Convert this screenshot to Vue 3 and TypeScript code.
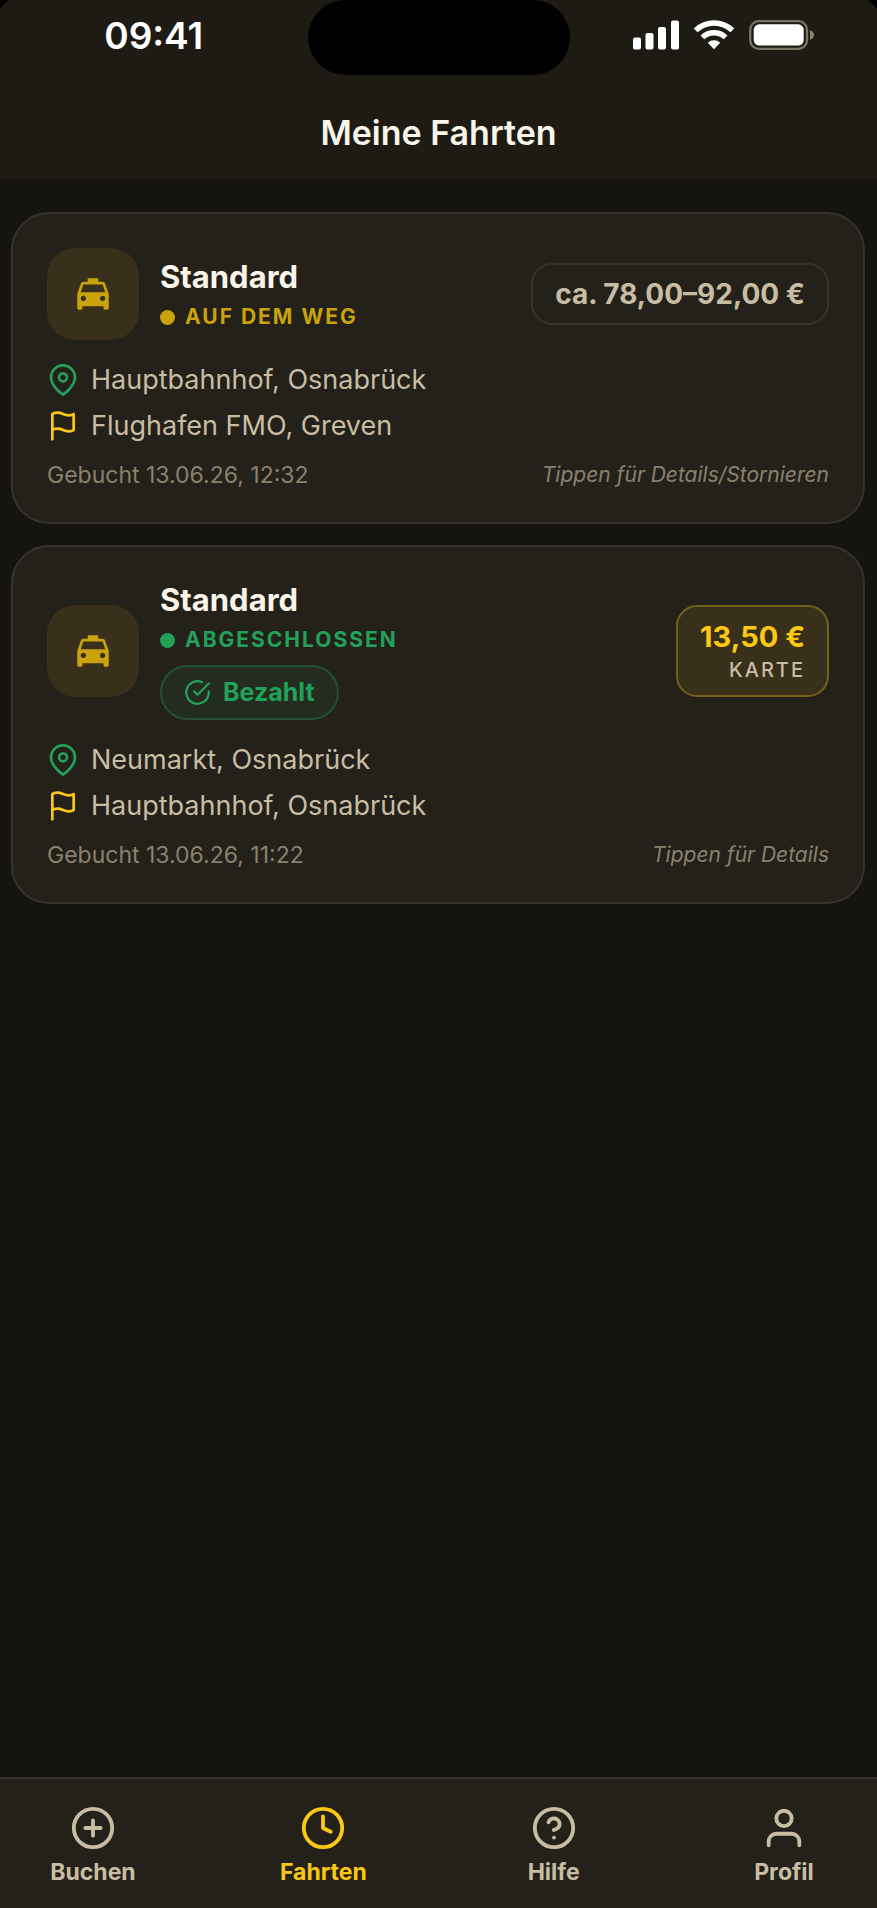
<script setup lang="ts">
import { ref } from 'vue'

interface Ride {
  id: number
  type: string
  status: string
  tone: 'active' | 'done'
  paid: boolean
  price: string
  method?: string
  from: string
  to: string
  booked: string
  hint: string
}

interface Tab {
  id: string
  label: string
}

const rides: Ride[] = [
  {
    id: 1,
    type: 'Standard',
    status: 'Auf dem Weg',
    tone: 'active',
    paid: false,
    price: 'ca. 78,00–92,00 €',
    from: 'Hauptbahnhof, Osnabrück',
    to: 'Flughafen FMO, Greven',
    booked: 'Gebucht 13.06.26, 12:32',
    hint: 'Tippen für Details/Stornieren',
  },
  {
    id: 2,
    type: 'Standard',
    status: 'Abgeschlossen',
    tone: 'done',
    paid: true,
    price: '13,50 €',
    method: 'Karte',
    from: 'Neumarkt, Osnabrück',
    to: 'Hauptbahnhof, Osnabrück',
    booked: 'Gebucht 13.06.26, 11:22',
    hint: 'Tippen für Details',
  },
]

const tabs: Tab[] = [
  { id: 'book', label: 'Buchen' },
  { id: 'rides', label: 'Fahrten' },
  { id: 'help', label: 'Hilfe' },
  { id: 'profile', label: 'Profil' },
]

const activeTab = ref('rides')
</script>

<template>
  <div class="app">
    <header class="header">
      <div class="statusbar">
        <time class="clock">09:41</time>
        <div class="island"></div>
        <div class="indicators" aria-hidden="true">
          <svg width="46" height="30" viewBox="0 0 46 30" fill="#fff">
            <rect x="0" y="17.5" width="8" height="12" rx="2" />
            <rect x="12.5" y="13" width="8" height="16.5" rx="2" />
            <rect x="25" y="7" width="8" height="22.5" rx="2" />
            <rect x="38" y="0.5" width="8" height="29" rx="2" />
          </svg>
          <svg width="40" height="30" viewBox="0 0 40 30" fill="none" stroke="#fff" stroke-width="5.4">
            <path d="M1.7 10.4a26.3 26.3 0 0 1 36.6 0" />
            <path d="M8.4 17.4a16.7 16.7 0 0 1 23.2 0" />
            <path d="M20 29.3l-6.2-6.6a9.3 9.3 0 0 1 12.4 0z" fill="#fff" stroke="none" />
          </svg>
          <svg width="65" height="30" viewBox="0 0 65 30">
            <rect x="1.2" y="1.2" width="56.8" height="27.6" rx="8.5" fill="none" stroke="#7c7464" stroke-width="2.3" />
            <rect x="4.7" y="4.3" width="50" height="21.2" rx="5.5" fill="#fff" />
            <path d="M61 10.3c2.4.6 4 2.4 4 4.7s-1.6 4.1-4 4.7z" fill="#8a8170" />
          </svg>
        </div>
      </div>
      <h1 class="title">Meine Fahrten</h1>
    </header>

    <main class="content">
      <ul class="rides">
        <li v-for="ride in rides" :key="ride.id">
          <button type="button" class="card">
            <span class="summary">
              <span class="tile">
                <svg width="42" height="42" viewBox="0 0 24 24" fill="currentColor" aria-hidden="true">
                  <path
                    d="M18.92 6.01C18.72 5.42 18.16 5 17.5 5H15V3H9v2H6.5c-.66 0-1.21.42-1.42 1.01L3 12v8c0 .55.45 1 1 1h1c.55 0 1-.45 1-1v-1h12v1c0 .55.45 1 1 1h1c.55 0 1-.45 1-1v-8l-2.08-5.99zM6.5 16c-.83 0-1.5-.67-1.5-1.5S5.67 13 6.5 13s1.5.67 1.5 1.5S7.33 16 6.5 16zm11 0c-.83 0-1.5-.67-1.5-1.5s.67-1.5 1.5-1.5 1.5.67 1.5 1.5-.67 1.5-1.5 1.5zM5 11l1.5-4.5h11L19 11H5z"
                  />
                </svg>
              </span>
              <span class="info">
                <span class="name">{{ ride.type }}</span>
                <span class="status" :class="ride.tone">
                  <span class="dot"></span>
                  <span>{{ ride.status }}</span>
                </span>
                <span v-if="ride.paid" class="badge">
                  <svg class="line-icon" width="27" height="27" viewBox="0 0 24 24" aria-hidden="true">
                    <path d="M22 11.08V12a10 10 0 1 1-5.93-9.14" />
                    <path d="M22 4L12 14.01l-3-3" />
                  </svg>
                  <span>Bezahlt</span>
                </span>
              </span>
              <span class="price" :class="{ final: ride.method }">
                <span class="amount">{{ ride.price }}</span>
                <span v-if="ride.method" class="method">{{ ride.method }}</span>
              </span>
            </span>

            <span class="stop">
              <svg class="line-icon pickup" width="32" height="32" viewBox="0 0 24 24" aria-hidden="true">
                <path d="M21 10c0 7-9 13-9 13s-9-6-9-13a9 9 0 0 1 18 0z" />
                <circle cx="12" cy="10" r="3" />
              </svg>
              <span>{{ ride.from }}</span>
            </span>
            <span class="stop">
              <svg class="line-icon target" width="32" height="32" viewBox="0 0 24 24" aria-hidden="true">
                <path d="M4 15s1-1 4-1 5 2 8 2 4-1 4-1V3s-1 1-4 1-5-2-8-2-4 1-4 1z" />
                <path d="M4 22v-7" />
              </svg>
              <span>{{ ride.to }}</span>
            </span>

            <span class="meta">
              <span class="booked">{{ ride.booked }}</span>
              <em class="hint">{{ ride.hint }}</em>
            </span>
          </button>
        </li>
      </ul>
    </main>

    <nav class="tabs">
      <button
        v-for="tab in tabs"
        :key="tab.id"
        type="button"
        class="tab"
        :class="{ current: tab.id === activeTab }"
        :aria-current="tab.id === activeTab ? 'page' : undefined"
        @click="activeTab = tab.id"
      >
        <svg class="line-icon" width="46" height="46" viewBox="0 0 24 24" aria-hidden="true">
          <circle v-if="tab.id !== 'profile'" cx="12" cy="12" r="10" />
          <path v-if="tab.id === 'book'" d="M12 8v8M8 12h8" />
          <path v-else-if="tab.id === 'rides'" d="M12 6v6l4 2" />
          <path v-else-if="tab.id === 'help'" d="M9.09 9a3 3 0 0 1 5.83 1c0 2-3 3-3 3M12 17h.01" />
          <template v-else>
            <path d="M20 21v-2a4 4 0 0 0-4-4H8a4 4 0 0 0-4 4v2" />
            <circle cx="12" cy="7" r="4" />
          </template>
        </svg>
        <span>{{ tab.label }}</span>
      </button>
    </nav>
  </div>
</template>

<style>
body {
  margin: 0;
  background: #15140f;
}
</style>

<style scoped>
.app {
  display: flex;
  flex-direction: column;
  min-height: 100vh;
  background: #15140f;
  color: #c8bda3;
  font-family: Inter, Roboto, "Liberation Sans", sans-serif;
}

button {
  margin: 0;
  border: 0;
  background: none;
  color: inherit;
  font: inherit;
  cursor: pointer;
}

.line-icon {
  flex: none;
  fill: none;
  stroke: currentColor;
  stroke-width: 2;
  stroke-linecap: round;
  stroke-linejoin: round;
}

.header {
  padding-bottom: 24px;
  background:
    linear-gradient(135deg, #000 6px, transparent 6px),
    linear-gradient(225deg, #000 6px, transparent 6px),
    #1e1b15;
}

.statusbar {
  display: grid;
  grid-template-columns: 1fr 262px 1fr;
  height: 75px;
}

.clock {
  align-self: start;
  justify-self: center;
  padding-top: 14px;
  color: #fff;
  font-size: 37px;
  font-weight: 600;
  line-height: 44px;
}

.island {
  height: 75px;
  border-radius: 38px;
  background: #000;
}

.indicators {
  display: flex;
  align-items: flex-start;
  justify-content: center;
  gap: 15px;
  padding-top: 20px;
}

.title {
  margin: 36px 0 0;
  color: #faf5e9;
  font-size: 34px;
  font-weight: 600;
  line-height: 44px;
  text-align: center;
}

.content {
  flex: 1;
  padding: 33px 12px 33px 11px;
}

.rides {
  display: flex;
  flex-direction: column;
  gap: 21px;
  margin: 0;
  padding: 0;
  list-style: none;
}

.card {
  display: flex;
  flex-direction: column;
  gap: 12px;
  width: 100%;
  padding: 34px 34px 33px;
  border: 2px solid #36332d;
  border-radius: 38px;
  background: #24211b;
  text-align: left;
}

.summary {
  display: flex;
  align-items: center;
  gap: 21px;
  margin-bottom: 11px;
}

.tile {
  display: flex;
  flex: none;
  align-items: center;
  justify-content: center;
  width: 92px;
  height: 92px;
  border-radius: 28px;
  background: #38301a;
  color: #c9a20c;
}

.info {
  display: flex;
  flex: 1;
  flex-direction: column;
  align-items: flex-start;
}

.name {
  color: #faf5e9;
  font-size: 31px;
  font-weight: 700;
  line-height: 38px;
}

.status {
  display: flex;
  align-items: center;
  gap: 10px;
  margin-top: 8px;
  font-size: 21px;
  font-weight: 700;
  line-height: 26px;
  letter-spacing: 2px;
  text-transform: uppercase;
}

.status.active {
  color: #c9a20c;
}

.status.done {
  color: #22a159;
}

.dot {
  width: 15px;
  height: 15px;
  border-radius: 50%;
  background: currentColor;
}

.badge {
  display: flex;
  align-items: center;
  gap: 12px;
  margin-top: 12px;
  padding: 11px 22px;
  border: 2px solid #235032;
  border-radius: 28px;
  background: #242c20;
  color: #22a159;
  font-size: 25px;
  font-weight: 700;
  line-height: 29px;
}

.price {
  display: flex;
  flex: none;
  flex-direction: column;
  align-items: flex-end;
  padding: 11px 22px;
  border: 2px solid #36332d;
  border-radius: 21px;
  color: #c8bda3;
}

.amount {
  font-size: 28px;
  font-weight: 700;
  line-height: 36px;
}

.price.final {
  border-color: #75601a;
  background: #38301a;
}

.final .amount {
  color: #fcc814;
  font-size: 29px;
  line-height: 38px;
}

.method {
  font-size: 20px;
  font-weight: 500;
  line-height: 28px;
  letter-spacing: 2px;
  text-transform: uppercase;
}

.stop {
  display: flex;
  align-items: center;
  gap: 12px;
  font-size: 27px;
  line-height: 34px;
}

.pickup {
  color: #22a159;
}

.target {
  color: #fcc814;
}

.meta {
  display: flex;
  align-items: center;
  justify-content: space-between;
  margin-top: 6px;
  color: #8a816d;
  line-height: 28px;
}

.booked {
  font-size: 23px;
}

.hint {
  font-size: 21px;
  font-style: italic;
}

.tabs {
  display: flex;
  justify-content: space-between;
  padding: 26px 13px 22px;
  border-top: 2px solid #36332d;
  background: #24211b;
}

.tab {
  display: flex;
  flex-direction: column;
  align-items: center;
  gap: 7px;
  width: 160px;
  padding: 0;
  font-size: 23px;
  font-weight: 700;
  line-height: 28px;
}

.tab.current {
  color: #fcc814;
}
</style>
